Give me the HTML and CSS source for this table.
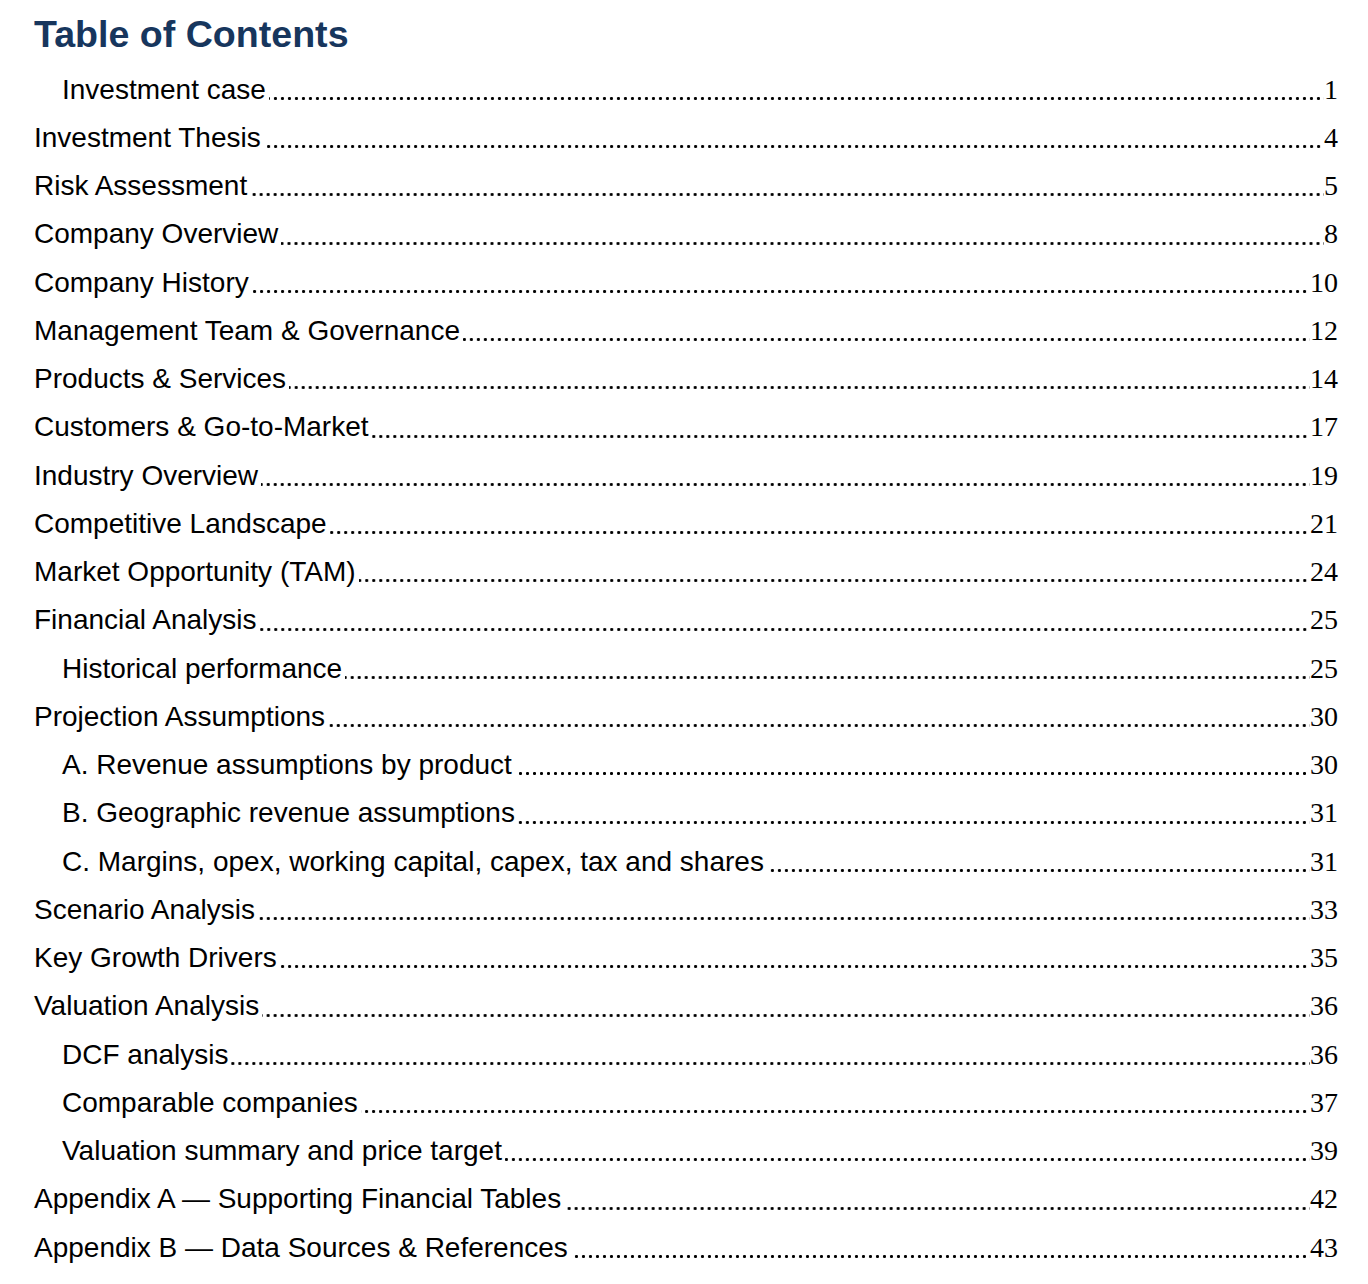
FILE: index.html
```html
<!DOCTYPE html>
<html lang="en">
<head>
<meta charset="utf-8">
<title>Table of Contents</title>
<link rel="stylesheet" href="styles.css">
</head>
<body>
<main class="toc">
  <h1 class="toc-title">Table of Contents</h1>
  <ol class="toc-list">
    <li class="toc-row sub"><span class="label">Investment case</span><span class="leader"></span><span class="page">1</span></li>
    <li class="toc-row"><span class="label">Investment Thesis</span><span class="leader"></span><span class="page">4</span></li>
    <li class="toc-row"><span class="label">Risk Assessment</span><span class="leader"></span><span class="page">5</span></li>
    <li class="toc-row"><span class="label">Company Overview</span><span class="leader"></span><span class="page">8</span></li>
    <li class="toc-row"><span class="label">Company History</span><span class="leader"></span><span class="page">10</span></li>
    <li class="toc-row"><span class="label">Management Team &amp; Governance</span><span class="leader"></span><span class="page">12</span></li>
    <li class="toc-row"><span class="label">Products &amp; Services</span><span class="leader"></span><span class="page">14</span></li>
    <li class="toc-row"><span class="label">Customers &amp; Go-to-Market</span><span class="leader"></span><span class="page">17</span></li>
    <li class="toc-row"><span class="label">Industry Overview</span><span class="leader"></span><span class="page">19</span></li>
    <li class="toc-row"><span class="label">Competitive Landscape</span><span class="leader"></span><span class="page">21</span></li>
    <li class="toc-row"><span class="label">Market Opportunity (TAM)</span><span class="leader"></span><span class="page">24</span></li>
    <li class="toc-row"><span class="label">Financial Analysis</span><span class="leader"></span><span class="page">25</span></li>
    <li class="toc-row sub"><span class="label">Historical performance</span><span class="leader"></span><span class="page">25</span></li>
    <li class="toc-row"><span class="label">Projection Assumptions</span><span class="leader"></span><span class="page">30</span></li>
    <li class="toc-row sub"><span class="label">A. Revenue assumptions by product</span><span class="leader"></span><span class="page">30</span></li>
    <li class="toc-row sub"><span class="label">B. Geographic revenue assumptions</span><span class="leader"></span><span class="page">31</span></li>
    <li class="toc-row sub"><span class="label">C. Margins, opex, working capital, capex, tax and shares</span><span class="leader"></span><span class="page">31</span></li>
    <li class="toc-row"><span class="label">Scenario Analysis</span><span class="leader"></span><span class="page">33</span></li>
    <li class="toc-row"><span class="label">Key Growth Drivers</span><span class="leader"></span><span class="page">35</span></li>
    <li class="toc-row"><span class="label">Valuation Analysis</span><span class="leader"></span><span class="page">36</span></li>
    <li class="toc-row sub"><span class="label">DCF analysis</span><span class="leader"></span><span class="page">36</span></li>
    <li class="toc-row sub"><span class="label">Comparable companies</span><span class="leader"></span><span class="page">37</span></li>
    <li class="toc-row sub"><span class="label">Valuation summary and price target</span><span class="leader"></span><span class="page">39</span></li>
    <li class="toc-row"><span class="label">Appendix A — Supporting Financial Tables</span><span class="leader"></span><span class="page">42</span></li>
    <li class="toc-row"><span class="label">Appendix B — Data Sources &amp; References</span><span class="leader"></span><span class="page">43</span></li>
  </ol>
</main>
</body>
</html>
```
FILE: styles.css
```css
html, body {
  margin: 0;
  padding: 0;
  background: #ffffff;
}

body {
  color: #000000;
  font-family: "Liberation Sans", Arial, sans-serif;
}

.toc {
  padding: 12px 30px 0 34px;
}

.toc-title {
  margin: 0;
  font-family: "Liberation Sans", Arial, sans-serif;
  font-weight: bold;
  font-size: 37.6px;
  line-height: 44px;
  color: #17365d;
}

.toc-list {
  list-style: none;
  margin: 9.5px 0 0 0;
  padding: 0;
}

.toc-row {
  display: flex;
  align-items: baseline;
  height: 48.25px;
  line-height: 48.25px;
  font-size: 28px;
  white-space: nowrap;
}

.toc-row.sub {
  padding-left: 28px;
}

.label {
  font-family: "Liberation Sans", Arial, sans-serif;
  flex: none;
}

.leader {
  flex: 1;
  min-width: 0;
  align-self: stretch;
  margin-left: 3px;
  background-image: radial-gradient(circle, #000 0 1.3px, rgba(0, 0, 0, 0) 1.7px);
  background-size: 7px 7px;
  background-repeat: repeat-x;
  background-position: right 2.2px top 29.3px;
}

.page {
  flex: none;
  font-family: "Liberation Serif", "Times New Roman", serif;
  font-size: 28px;
}
```
